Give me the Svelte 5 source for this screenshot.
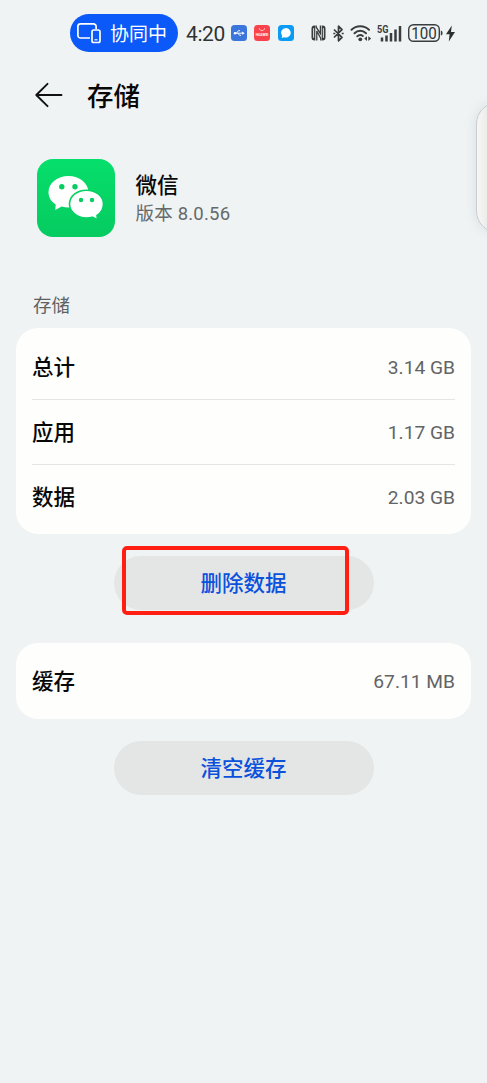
<script>
  const storage = [
    { label: "总计", value: "3.14 GB" },
    { label: "应用", value: "1.17 GB" },
    { label: "数据", value: "2.03 GB" },
  ];
  const cache = [{ label: "缓存", value: "67.11 MB" }];
</script>

{#snippet card(rows)}
  <ul class="card">
    {#each rows as row}
      <li class="row">
        <span class="row__label">{row.label}</span>
        <span class="row__value">{row.value}</span>
      </li>
    {/each}
  </ul>
{/snippet}

<div class="screen">
  <div class="status">
    <div class="status__pill">
      <svg width="24" height="21" viewBox="0 0 24 21" fill="none" stroke="#fff" stroke-width="1.7">
        <path d="M13 15H3.5a2.6 2.6 0 0 1-2.6-2.6v-9A2.6 2.6 0 0 1 3.500.9h13A2.600 2.600 0 0 1 19.100 3.500V6" />
        <rect x="15" y="7" width="8" height="12.500" rx="1.800" />
        <path d="M17.500 16.800h3" stroke-width="1.200" />
      </svg>
      <span>协同中</span>
    </div>
    <span class="status__time">4:20</span>

    <svg class="app-usb" width="16" height="16" viewBox="0 0 16 16">
      <rect width="16" height="16" rx="3.500" fill="#3b76dc" />
      <g stroke="#fff" stroke-width="1" fill="none">
        <path d="M3 8.200h9M5.500 8l2-2.300h1.500M7 8.300l1.600 2h1.400" />
      </g>
      <circle cx="4" cy="8.200" r="1.200" fill="#fff" />
      <path d="M11.200 6.500l2.500 1.700-2.500 1.600z" fill="#fff" />
    </svg>
    <svg class="app-store" width="16" height="16" viewBox="0 0 16 16">
      <rect width="16" height="16" rx="3.500" fill="#f9424b" />
      <path d="M5.300 3.200c.4 3.200 5 3.200 5.400 0" fill="none" stroke="#ffd5d5" stroke-width=".9" />
      <text x="8" y="11" text-anchor="middle" textLength="12.500" lengthAdjust="spacingAndGlyphs">HUAWEI</text>
    </svg>
    <svg class="app-chat" width="16" height="16" viewBox="0 0 16 16">
      <rect width="16" height="16" rx="3.500" fill="#0b9bf5" />
      <path d="M8 3a5 4.800 0 1 1-2.200 9.200L3.700 13l.4-2.200A5 4.800 0 0 1 8 3z" fill="#fff" />
    </svg>

    <svg class="nfc" width="15" height="16" viewBox="0 0 15 16">
      <path d="M4.300.5H3.500q-3 0-3 3v9q0 3 3 3h.8zM10.700 15.500h.8q3 0 3-3v-9q0-3-3-3h-.8z" fill="#3a3d3e" />
      <path d="M5.800 15.500V6l4 7.500V15.500M5.200.5v1.700l4.200 6.300V.5" fill="none" stroke="#3a3d3e" stroke-width="1.300" />
      <path d="M2.600 3.200v9.600M12.400 3.200v9.600" stroke="#eff3f4" stroke-width=".9" />
    </svg>
    <svg class="bluetooth" width="11" height="17" viewBox="0 0 11 17">
      <path d="M1 4.500l8 7.800-3.500 3.500V1.200L9 4.700 1 12.500" fill="none" stroke="#3a3d3e" stroke-width="1.700" stroke-linejoin="round" />
      <path d="M.3 8.500h2M8.700 8.500h2" stroke="#3a3d3e" stroke-width="1.600" />
    </svg>
    <svg class="wifi" width="22" height="18" viewBox="0 0 22 18">
      <g fill="none" stroke="#3a3d3e" stroke-width="2" stroke-linecap="round">
        <path d="M1.500 5.700a12.500 12.500 0 0 1 17.500 0M4.500 9.200a8.200 8.200 0 0 1 11.500 0M7.300 12.300a4.400 4.400 0 0 1 5.600-.3" />
      </g>
      <circle cx="10.300" cy="15.300" r="1.900" fill="#3a3d3e" />
      <path d="M17 12.300v4.600l-2.800-2.300zM18.300 12.300v4.600l2.800-2.300z" fill="#3a3d3e" />
    </svg>
    <svg class="signal" width="25" height="17" viewBox="0 0 25 17">
      <text x="0" y="8" textLength="11.500" lengthAdjust="spacingAndGlyphs">5G</text>
      <path d="M5 16.500v-4M9.500 16.500v-6M14 16.500V8M18.500 16.500v-12M23 16.500V1" stroke="#3a3d3e" stroke-width="2.500" />
    </svg>
    <svg class="battery" width="36" height="18" viewBox="0 0 36 18">
      <rect x=".7" y=".7" width="30.600" height="16.600" rx="4.800" fill="none" stroke="#3a3d3e" stroke-width="1.400" />
      <path d="M32.800 6.500q1.800 0 1.800 2.500t-1.800 2.500z" fill="#3a3d3e" />
      <text x="16" y="14.800" text-anchor="middle" textLength="25.500" lengthAdjust="spacingAndGlyphs">100</text>
    </svg>
    <svg class="bolt" width="9" height="17" viewBox="0 0 9 17">
      <path d="M5.800.5L0 9.300h3.600L2.800 16.500 9 7H5z" fill="#2c2f30" />
    </svg>
  </div>

  <header class="header">
    <svg width="28" height="26" viewBox="0 0 28 26" fill="none" stroke="#111" stroke-width="1.900" stroke-linecap="round" stroke-linejoin="round">
      <path d="M26.500 13H1.500M12.500 1.800L1.300 13l11.200 11.200" />
    </svg>
    <h1>存储</h1>
  </header>

  <section class="app">
    <svg width="78" height="78" viewBox="0 0 78 78">
      <defs>
        <linearGradient id="green" x1="0" y1="0" x2="0" y2="1">
          <stop offset="0" stop-color="#06df6b" />
          <stop offset="1" stop-color="#06cb60" />
        </linearGradient>
      </defs>
      <rect width="78" height="78" rx="16" fill="url(#green)" />
      <path d="M31.500 17C20.500 17 11.500 24 11.500 33.200c0 5 2.700 9.300 7.200 12.300L18.300 51l6.300-3.400c2.200.7 4.500 1 6.900 1 11 0 20-6.600 20-15.400S42.500 17 31.500 17z" fill="#fff" />
      <path d="M49.500 31.200c-9.500 0-17 6-17 13.800s7.500 14 17 14c2 0 4-.2 5.800-.8l5.200 2.800-.5-4.500c4-2.600 6.500-6.800 6.500-11.500 0-7.800-7.500-13.800-17-13.800z" fill="#fff" stroke="#08d064" stroke-width="1.600" />
      <g fill="#08cd62">
        <circle cx="24.800" cy="27.800" r="2.700" />
        <circle cx="38" cy="27.800" r="2.700" />
        <circle cx="44" cy="41" r="2.200" />
        <circle cx="55" cy="41" r="2.200" />
      </g>
    </svg>
    <div class="app__info">
      <div class="app__name">微信</div>
      <div class="app__version">版本 8.0.56</div>
    </div>
  </section>

  <h2>存储</h2>
  {@render card(storage)}
  <button class="action marked"><span>删除数据</span></button>
  {@render card(cache)}
  <button class="action"><span>清空缓存</span></button>

  <div class="side-handle"></div>
</div>

<style>
:global(body) {
  margin: 0;
  background: #eff3f4;
}

.screen {
  position: relative;
  box-sizing: border-box;
  height: 1083px;
  padding: 14px 16px 0;
  overflow: hidden;
  background: #eff3f4;
  color: #080808;
  font-family: Roboto, "Noto Sans CJK SC", sans-serif;
}

svg {
  display: block;
  flex: none;
}

.status {
  display: flex;
  align-items: center;
  height: 38px;
  margin-left: 54px;
}

.status__pill {
  display: flex;
  align-items: center;
  box-sizing: border-box;
  width: 108px;
  height: 38px;
  padding-left: 7px;
  gap: 9px;
  border-radius: 19px;
  background: #0b59f8;
  color: #fff;
  font-size: 19px;
  line-height: 38px;
  white-space: nowrap;
}

.status__pill span {
  padding-top: 3px;
}

.status__time {
  width: 45px;
  padding: 1px 0 0 8px;
  color: #303334;
  font-size: 21px;
  letter-spacing: -0.4px;
}

.app-store {
  margin-left: 7px;
}

.app-chat {
  margin-left: 8px;
}

.app-store text {
  fill: #fff;
  font-size: 4px;
  font-weight: 700;
}

.nfc {
  margin-left: 17px;
}

.bluetooth {
  margin-left: 6.500px;
}

.wifi {
  margin-left: 6.500px;
}

.signal {
  margin-left: 5px;
}

.signal text {
  fill: #3a3d3e;
  font-size: 10px;
  font-weight: 700;
}

.battery {
  margin-left: 6px;
}

.battery text {
  fill: #303334;
  font-size: 16px;
}

.bolt {
  margin-left: 2px;
}

.header {
  display: flex;
  align-items: center;
  gap: 24px;
  height: 40px;
  margin: 23px 0 0 19px;
}

h1 {
  margin: 0;
  padding-top: 4px;
  font-size: 26.500px;
  font-weight: 500;
  line-height: 40px;
}

.app {
  display: flex;
  align-items: center;
  gap: 20.500px;
  margin: 44px 0 0 21px;
}

.app__info {
  padding-top: 4px;
}

.app__name {
  font-size: 21.500px;
  font-weight: 500;
  line-height: 28px;
}

.app__version {
  color: #66696a;
  font-size: 18.500px;
  line-height: 28px;
  letter-spacing: 0.2px;
}

h2 {
  margin: 55px 0 8px 17px;
  color: #5f6263;
  font-size: 18.500px;
  font-weight: 400;
  line-height: 28px;
}

.card {
  margin: 0;
  padding: 6px 16px;
  border-radius: 22px;
  background: #fefefd;
  list-style: none;
}

.row {
  display: flex;
  align-items: center;
  justify-content: space-between;
  height: 64px;
}

.row:first-child:not(:last-child) {
  height: 65px;
}

.row:last-child:not(:first-child) {
  height: 63px;
}

.row + .row {
  border-top: 1px solid #e4e6e6;
}

.row__label {
  padding-bottom: 3px;
  font-size: 21.500px;
  font-weight: 500;
}

.row__value {
  padding-top: 1px;
  color: #626465;
  font-size: 19.200px;
}

.action {
  position: relative;
  display: block;
  width: 260px;
  height: 54px;
  margin: 22px 0 0 97.500px;
  padding: 0;
  border: 0;
  border-radius: 27px;
  background: #e4e6e6;
  color: #0a51dc;
  font: 500 21.500px/54px Roboto, "Noto Sans CJK SC", sans-serif;
}

.action span {
  display: block;
  padding-top: 1px;
}

.action + .card {
  margin-top: 33px;
  padding: 5.500px 16px 6px;
}

/* highlight frame drawn over the button */
.marked::after {
  content: "";
  position: absolute;
  top: -10px;
  left: 8px;
  box-sizing: border-box;
  width: 227px;
  height: 69px;
  border: 4px solid #ff2013;
  border-radius: 5px;
}

.side-handle {
  position: absolute;
  top: 102px;
  left: 476px;
  box-sizing: border-box;
  width: 60px;
  height: 131px;
  border: 1px solid #c9cdce;
  border-radius: 22px;
  background: linear-gradient(90deg, #f6f6f5, #ebeaea 12px);
  box-shadow: 0 0 12px rgba(80, 100, 110, 0.14);
}
</style>
